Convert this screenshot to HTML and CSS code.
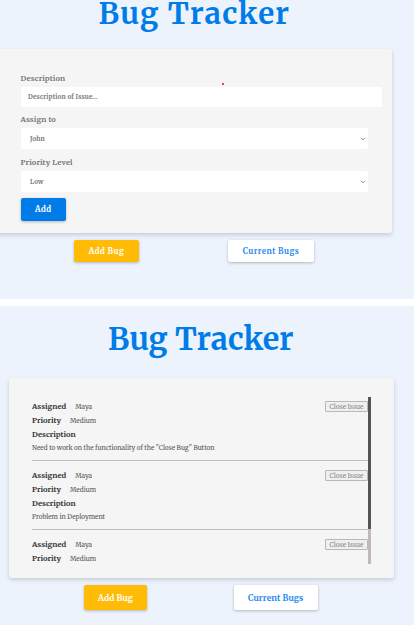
FILE: index.html
```html
<!DOCTYPE html>
<html lang="en">
<head>
<meta charset="utf-8">
<title>Bug Tracker</title>
<link rel="stylesheet" href="styles.css">
</head>
<body>
<section class="view view-form">
  <h1>Bug Tracker</h1>
  <form class="card form-card">
    <label>Description</label>
    <div class="field input"><span>Description of Issue...</span><i class="dot"></i></div>
    <label>Assign to</label>
    <div class="field select"><span>John</span><svg class="chevron" viewBox="0 0 6 4"><path d="M1 .8 3 2.8 5 .8"/></svg></div>
    <label>Priority Level</label>
    <div class="field select"><span>Low</span><svg class="chevron" viewBox="0 0 6 4"><path d="M1 .8 3 2.8 5 .8"/></svg></div>
    <button type="button" class="btn primary">Add</button>
  </form>
  <nav class="actions">
    <button class="btn warning">Add Bug</button>
    <button class="btn light">Current Bugs</button>
  </nav>
</section>
<section class="view view-list">
  <h1>Bug Tracker</h1>
  <div class="card list-card">
    <div class="scroller">
      <div class="issues">
        <article class="issue">
          <button class="close">Close Issue</button>
          <p class="row"><b>Assigned</b><span>Maya</span></p>
          <p class="row"><b>Priority</b><span>Medium</span></p>
          <p class="row"><b>Description</b></p>
          <p class="text">Need to work on the functionality of the "Close Bug" Button</p>
        </article>
        <article class="issue">
          <button class="close">Close Issue</button>
          <p class="row"><b>Assigned</b><span>Maya</span></p>
          <p class="row"><b>Priority</b><span>Medium</span></p>
          <p class="row"><b>Description</b></p>
          <p class="text">Problem in Deployment</p>
        </article>
        <article class="issue">
          <button class="close">Close Issue</button>
          <p class="row"><b>Assigned</b><span>Maya</span></p>
          <p class="row"><b>Priority</b><span>Medium</span></p>
        </article>
      </div>
      <div class="track"><div class="thumb"></div></div>
    </div>
  </div>
  <nav class="actions">
    <button class="btn warning">Add Bug</button>
    <button class="btn light">Current Bugs</button>
  </nav>
</section>
</body>
</html>
```
FILE: styles.css
```css
* { box-sizing: border-box; }
body {
  margin: 0;
  width: 414px;
  height: 625px;
  overflow: hidden;
  background: #fff;
  font-family: Merriweather, "DejaVu Serif Condensed", "DejaVu Serif", serif;
}
h1, p { margin: 0; }
button { font-family: inherit; padding: 0; }
.view { background: #ecf3fc; overflow: hidden; }
.view-form { height: 299px; }
.view-list { height: 319px; margin-top: 7px; }
h1 { color: #007ce8; font-weight: 700; white-space: nowrap; }
.view-form h1 { font-size: 29.5px; letter-spacing: 1.2px; line-height: 27px; height: 49px; padding-left: 98.5px; }
.view-list h1 { font-size: 30.5px; letter-spacing: .1px; line-height: 36px; height: 72px; padding: 15px 0 0 108px; }
.card { background: #f5f5f5; border-radius: 3px; box-shadow: 0 2px 4px rgba(0,0,0,.16); }
.form-card { width: 397px; height: 184px; margin-left: -5px; padding: 23px 0 0 25.5px; color: #777; }
label { display: block; font-size: 7.5px; letter-spacing: .12px; line-height: 14px; height: 15px; font-weight: 700; }
.field { display: flex; align-items: center; background: #fff; border-radius: 1px; font-size: 6.2px; letter-spacing: .18px; font-weight: 700; position: relative; }
.input { width: 361.5px; height: 20px; padding-left: 7.5px; margin-bottom: 6px; }
.select { width: 347.5px; height: 21px; padding: 0 2px 0 9.5px; justify-content: space-between; margin-bottom: 7px; }
.chevron { width: 6px; height: 4px; fill: none; stroke: #777; stroke-width: .9; }
.dot { position: absolute; left: 201px; top: -4.5px; width: 2px; height: 2px; border-radius: 1px; background: #f00; }
.btn { border: 0; border-radius: 2px; font-size: 7.8px; letter-spacing: .48px; font-weight: 700; box-shadow: 0 1px 3px rgba(0,0,0,.25); white-space: nowrap; }
.primary { display: block; width: 45.5px; height: 22.5px; margin-top: -1px; background: #007ce8; color: #fff; }
.warning { background: #ffbb05; color: #fff; }
.light { background: #fff; color: #2588ef; }
.actions { display: flex; }
.view-form .actions { padding: 7px 0 0 74px; gap: 89px; }
.view-form .warning { width: 65px; height: 22px; }
.view-form .light { width: 86px; height: 22px; }
.list-card { width: 385px; height: 200px; margin-left: 9px; padding: 19px 0 0 23px; }
.scroller { display: flex; width: 339px; height: 167px; }
.issues { width: 336px; height: 167px; overflow: hidden; }
.track { width: 3px; background: #c0b9b9; }
.thumb { height: 132px; background: #555; }
.issue { position: relative; height: 69px; padding-top: 2.6px; }
.issue:not(:last-child)::after { content: ""; position: absolute; left: 0; right: 0; top: 63px; height: 1px; background: #bfbfbf; }
.row { display: flex; align-items: center; height: 14px; font-size: 7.55px; line-height: 14px; color: #333; }
.row span { font-size: 6.4px; color: #555; margin-left: 9px; }
.text { font-size: 6.4px; line-height: 12px; color: #555; white-space: nowrap; }
.close { position: absolute; right: 0; top: 4px; width: 43px; height: 11px; border: 1px solid #b8b8b8; border-radius: 1px; background: #efefef; color: #888; font-size: 6.45px; line-height: 8px; white-space: nowrap; }
.view-list .actions { padding: 7px 0 0 84px; gap: 87px; }
.view-list .warning { width: 63px; height: 25px; }
.view-list .light { width: 83.5px; height: 25px; }
.view-list .btn { font-size: 8.3px; letter-spacing: .13px; }
```
